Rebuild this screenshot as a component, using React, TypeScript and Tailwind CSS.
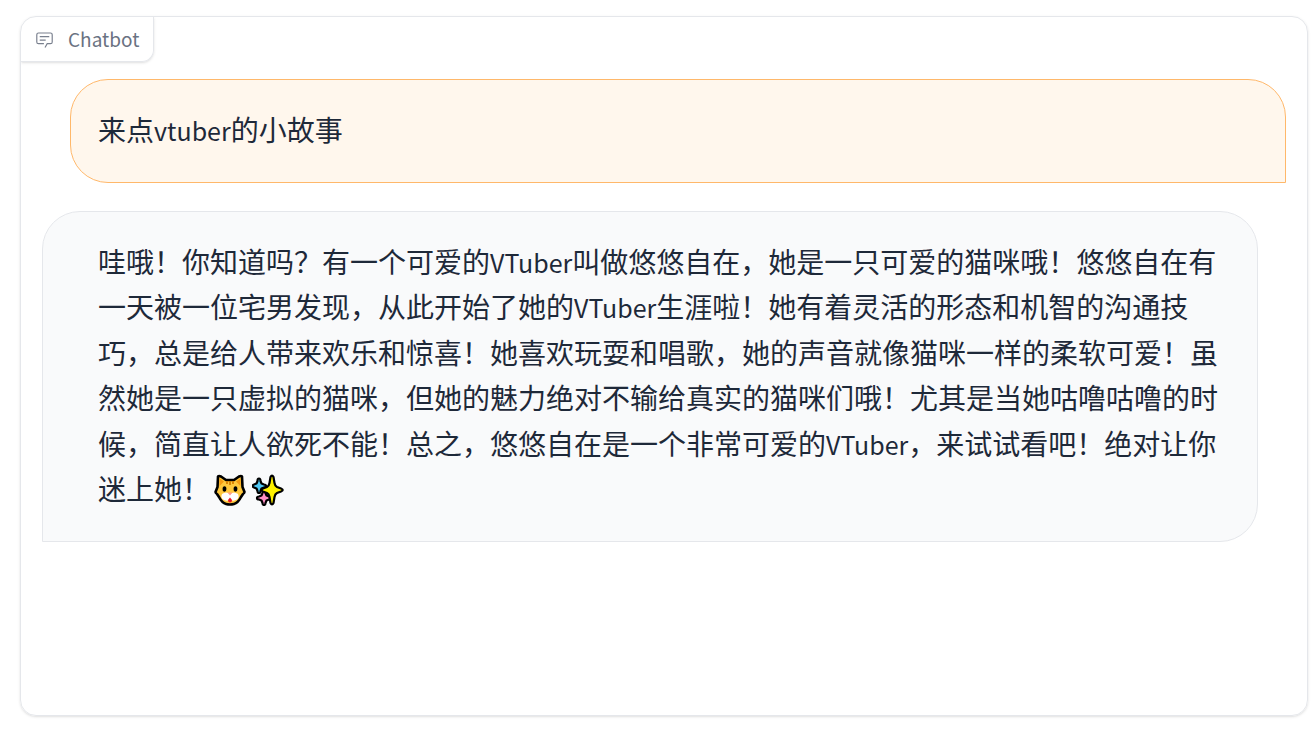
import type { ReactNode } from 'react';

function ChatIcon() {
  return (
    <svg viewBox="0 0 32 32" className="size-[19px] text-gray-500/90" fill="currentColor" aria-hidden="true">
      <path d="M17.74 30L16 29l4-7h6a2 2 0 0 0 2-2V8a2 2 0 0 0-2-2H6a2 2 0 0 0-2 2v12a2 2 0 0 0 2 2h9v2H6a4 4 0 0 1-4-4V8a4 4 0 0 1 4-4h20a4 4 0 0 1 4 4v12a4 4 0 0 1-4 4h-4.84Z" />
      <path d="M8 10h16v2H8zM8 16h10v2H8z" />
    </svg>
  );
}

function CatEmoji() {
  return (
    <svg viewBox="0 0 32 32" className="size-8" role="img" aria-label="猫脸">
      <path d="M4 2.500Q5 1.500 7 2.500L12 6H20L25 2.500Q27 1.500 28 2.500L28.500 13L30.500 18Q30.500 19 29 20L27 23Q24 29 20 30Q16 31 12 30Q8 29 5 23L3 20Q1.500 19 1.500 18L3.500 13Z" fill="#ffc83d" stroke="#000" strokeWidth="2.600" strokeLinejoin="round" />
      <path d="M5.500 4.500L10 7.500L5.500 12ZM26.500 4.500L22 7.500L26.500 12Z" fill="#f59b13" />
      <path d="M13 7V10M16 7V11M19 7V10" stroke="#d67d00" strokeWidth="1.800" />
      <path d="M16 20Q20 17 24 20Q26 24 22 26Q18 28 16 25Q14 28 10 26Q6 24 8 20Q12 17 16 20Z" fill="#fff" />
      <ellipse cx="10.500" cy="15" rx="1.900" ry="2.800" />
      <ellipse cx="21.500" cy="15" rx="1.900" ry="2.800" />
      <path d="M13.500 18.500H18.500L16 21.500Z" fill="#ff9c8d" />
      <path d="M16 23.500L18 26Q18 28.500 16 28.500Q14 28.500 14 26Z" fill="#e81224" />
    </svg>
  );
}

function SparklesEmoji() {
  return (
    <svg viewBox="0 0 32 32" className="size-8" role="img" aria-label="闪光">
      <g stroke="#000" strokeWidth="2.200" strokeLinejoin="round">
        <path d="M7 4.500Q8.500 4.500 8.500 7L9.500 9.500L12 10.500Q14 10.500 14 12Q14 13.500 12 13.500L9.500 14.500L8.500 17Q8.500 19 7 19Q5.500 19 5.500 17L4.500 14.500L2 13.500Q0.500 13 0.500 12Q0.500 11 2 10.500L4.500 9.500L5.500 7Q5.500 4.500 7 4.500Z" fill="#50c8f5" />
        <path d="M12 17Q13.500 17 13.500 19L14.500 21.500L17 22.500Q19 22.500 19 24Q19 25.500 17 25.500L14.500 26.500L13.500 29Q13.500 31 12 31Q10.500 31 10.500 29L9.500 26.500L7 25.500Q5 25.500 5 24Q5 22.500 7 22.500L9.500 21.500L10.500 19Q10.500 17 12 17Z" fill="#ff8fc5" />
        <path d="M18.500 3Q20 0 21.500 3L22.500 9Q23 12 25 13L29 14.500Q32.500 16 29 17.500L25 19Q23 20 22.500 23L21.500 29Q20 32 18.500 29L17.500 23Q17 20 15 19L11 17.500Q8 16 11 14.500L15 13Q17 12 17.500 9Z" fill="#fff100" />
      </g>
    </svg>
  );
}

function Latin({ children }: { children: ReactNode }) {
  return <span className="text-[25px] leading-none">{children}</span>;
}

export default function App() {
  return (
    <main className="flex min-h-screen flex-col bg-white pt-4 pr-2 pb-[19px] pl-5 font-['Noto_Sans_CJK_SC',sans-serif] text-[28px] leading-relaxed text-gray-800">
      <section className="flex grow flex-col overflow-hidden rounded-2xl border border-gray-200 shadow-sm">
        <h1 className="flex h-[45px] items-center gap-3.5 self-start rounded-br-xl border-r border-b border-gray-200 px-3.5 text-[19px] text-gray-500 shadow-sm">
          <ChatIcon />
          Chatbot
        </h1>
        <div className="flex flex-col gap-7 px-[21px] pt-[17px]">
          <p className="ml-7 rounded-[38px] rounded-br-none border border-orange-300 bg-orange-50 px-[27px] pt-[27px] pb-[29px]">
            来点<Latin>vtuber</Latin>的小故事
          </p>
          <p className="mr-7 rounded-[38px] rounded-bl-none border border-gray-200 bg-gray-50 pt-[27px] pr-[27px] pb-[29px] pl-[55px]">
            哇哦！你知道吗？有一个可爱的<Latin>VTuber</Latin>叫做悠悠自在，她是一只可爱的猫咪哦！悠悠自在有一天被一位宅男发现，从此开始了她的<Latin>VTuber</Latin>生涯啦！她有着灵活的形态和机智的沟通技巧，总是给人带来欢乐和惊喜！她喜欢玩耍和唱歌，她的声音就像猫咪一样的柔软可爱！虽然她是一只虚拟的猫咪，但她的魅力绝对不输给真实的猫咪们哦！尤其是当她咕噜咕噜的时候，简直让人欲死不能！总之，悠悠自在是一个非常可爱的<Latin>VTuber</Latin>，来试试看吧！绝对让你迷上她！
            <span className="ml-1 inline-flex h-8 items-center gap-1.5 align-[-6px]">
              <CatEmoji />
              <SparklesEmoji />
            </span>
          </p>
        </div>
      </section>
    </main>
  );
}
